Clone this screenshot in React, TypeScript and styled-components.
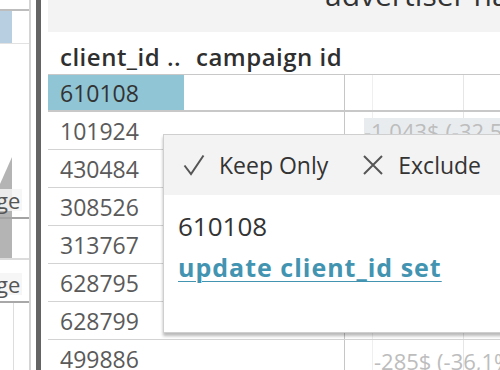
import styled, { createGlobalStyle } from "styled-components";

const GlobalStyle = createGlobalStyle`
  body {
    margin: 0;
    background: #ffffff;
  }
`;

const rows = [
  { id: "610108", value: "", selected: true },
  { id: "101924", value: "-1,043$ (-32,5%)", highlight: true },
  { id: "430484", value: "" },
  { id: "308526", value: "" },
  { id: "313767", value: "" },
  { id: "628795", value: "" },
  { id: "628799", value: "" },
  { id: "499886", value: "-285$ (-36,1%)" },
];

function App() {
  return (
    <>
      <GlobalStyle />
      <Frame>
        <SidePanel>
          <SideCut />
          <SideLine $color="#bdbdbd" $size={2} />
          <SideBlock $height={32}>
            <SideFill $color="#b8cfe2" />
          </SideBlock>
          <SideLine $color="#e2e2e2" $size={1} />
          <SideBlock $height={113} />
          <SideBlock $height={60}>
            <SideSlope />
            <SideLabel>ge</SideLabel>
          </SideBlock>
          <SideLine $color="#a3a3a3" $size={2} />
          <SideBlock $height={39}>
            <SideFill $color="#b4b4b4" />
          </SideBlock>
          <SideLine $color="#dcdcdc" $size={2} />
          <SideBlock $height={41}>
            <SideLabel>ge</SideLabel>
          </SideBlock>
          <SideLine $color="#a8a8a8" $size={2} />
          <SideRest />
        </SidePanel>
        <Gap $width={5} />
        <Divider />
        <Gap $width={7} />
        <Main>
          <TitleBar>
            <Title>advertiser name</Title>
          </TitleBar>
          <Gap $height={8} />
          <HeaderRow>
            <HeaderCell>client_id ..</HeaderCell>
            <HeaderCell>campaign id</HeaderCell>
          </HeaderRow>
          {rows.map((r, i) => (
            <Row key={r.id} $first={i === 0}>
              <IdCell $selected={r.selected}>{r.id}</IdCell>
              <Cell />
              <Cell $line="#c6c6c6">
                {r.highlight && <Value $highlight>{r.value}</Value>}
              </Cell>
              <Cell $line="#efefef">
                {!r.highlight && r.value && <Value>{r.value}</Value>}
              </Cell>
              <Cell $line="#e6e6e6" />
            </Row>
          ))}
        </Main>
        <Popup>
          <Toolbar>
            <Action>
              <svg width="22" height="22" viewBox="0 0 22 22">
                <path
                  d="M1.5 11.5 L8 20 L20.5 1.5"
                  fill="none"
                  stroke="#555"
                  strokeWidth="2"
                />
              </svg>
              Keep Only
            </Action>
            <Action>
              <svg width="22" height="22" viewBox="0 0 22 22">
                <path
                  d="M2 2 L20 20 M20 2 L2 20"
                  fill="none"
                  stroke="#555"
                  strokeWidth="2"
                />
              </svg>
              Exclude
            </Action>
          </Toolbar>
          <PopupBody>
            <PopupValue>610108</PopupValue>
            <SetLink href="#">update client_id set</SetLink>
          </PopupBody>
        </Popup>
      </Frame>
    </>
  );
}

export default App;

const Frame = styled.div`
  width: 500px;
  height: 370px;
  display: flex;
  overflow: hidden;
  position: relative;
  background: #ffffff;
  font-family: "Open Sans", "Noto Sans", sans-serif;
  color: #333;
`;

const SidePanel = styled.div`
  width: 29px;
  flex-shrink: 0;
  border-right: 2px solid #d4d4d4;
  display: flex;
  flex-direction: column;
`;

const SideCut = styled.div`
  height: 9px;
`;

const SideLine = styled.div<{ $color: string; $size: number }>`
  height: ${(p) => p.$size}px;
  background: ${(p) => p.$color};
  flex-shrink: 0;
`;

const SideBlock = styled.div<{ $height?: number }>`
  height: ${(p) => p.$height}px;
  flex-shrink: 0;
  position: relative;
  display: flex;
  align-items: flex-end;
  overflow: hidden;
`;

const SideFill = styled.div<{ $color: string }>`
  width: 12px;
  height: 100%;
  background: ${(p) => p.$color};
`;

const SideSlope = styled.div`
  width: 12px;
  height: 100%;
  background: #b4b4b4;
  clip-path: polygon(100% 0, 100% 100%, 0 100%, 0 45%);
`;

const SideLabel = styled.span`
  position: absolute;
  left: -4px;
  bottom: 6px;
  font-size: 22px;
  line-height: 22px;
  color: #555;
  background: rgba(245, 245, 245, 0.85);
  padding-right: 2px;
`;

const SideRest = styled.div`
  flex: 1;
  width: 13px;
  border-right: 1px solid #dddddd;
`;

const Gap = styled.div<{ $width?: number; $height?: number }>`
  flex-shrink: 0;
  width: ${(p) => (p.$width ? `${p.$width}px` : "auto")};
  height: ${(p) => (p.$height ? `${p.$height}px` : "auto")};
`;

const Divider = styled.div`
  width: 5px;
  flex-shrink: 0;
  background: #646464;
`;

const Main = styled.div`
  flex: 1;
  display: flex;
  flex-direction: column;
  min-width: 0;
`;

const TitleBar = styled.div`
  height: 32px;
  background: #f3f3f3;
  padding-left: 277px;
  overflow: hidden;
  flex-shrink: 0;
`;

const Title = styled.div`
  margin-top: -20px;
  font-size: 30px;
  line-height: 30px;
  white-space: nowrap;
  color: #333;
`;

const HeaderRow = styled.div`
  height: 34px;
  display: grid;
  grid-template-columns: 136px 160px 1fr;
  align-items: center;
  border-bottom: 1px solid #c8c8c8;
  flex-shrink: 0;
`;

const HeaderCell = styled.div`
  padding-left: 12px;
  font-size: 24px;
  line-height: 30px;
  font-weight: 600;
  letter-spacing: 0.5px;
  color: #2f2f2f;
  white-space: nowrap;
`;

const Row = styled.div<{ $first?: boolean }>`
  height: ${(p) => (p.$first ? 35 : 37)}px;
  display: grid;
  grid-template-columns: 136px 160px 28px 91px 1fr;
  border-bottom: ${(p) => (p.$first ? "2px solid #c8c8c8" : "1px solid #d3d3d3")};
  flex-shrink: 0;
`;

const Cell = styled.div<{ $line?: string }>`
  border-left: ${(p) => (p.$line ? `1px solid ${p.$line}` : "none")};
  position: relative;
  display: flex;
  align-items: center;
  white-space: nowrap;
`;

const IdCell = styled.div<{ $selected?: boolean }>`
  display: flex;
  align-items: center;
  padding-left: 12px;
  font-size: 23px;
  color: ${(p) => (p.$selected ? "#333" : "#5a5a5a")};
  background: ${(p) => (p.$selected ? "#8fc5d4" : "transparent")};
`;

const Value = styled.span<{ $highlight?: boolean }>`
  position: absolute;
  z-index: 1;
  left: ${(p) => (p.$highlight ? 19 : 1)}px;
  top: ${(p) => (p.$highlight ? 6 : 8)}px;
  font-size: 22px;
  line-height: 26px;
  color: #bdbdbd;
  background: ${(p) => (p.$highlight ? "#e9ecef" : "transparent")};
  padding-right: 40px;
`;

const Popup = styled.div`
  position: absolute;
  left: 163px;
  top: 134px;
  width: 360px;
  height: 197px;
  background: #ffffff;
  border: 1px solid #cfcfcf;
  box-shadow: 0 3px 3px rgba(0, 0, 0, 0.28);
  z-index: 5;
`;

const Toolbar = styled.div`
  height: 60px;
  background: #f3f3f3;
  display: flex;
  align-items: center;
  gap: 34px;
  padding-left: 19px;
`;

const Action = styled.div`
  display: flex;
  align-items: center;
  gap: 14px;
  font-size: 23px;
  color: #333;
  white-space: nowrap;
`;

const PopupBody = styled.div`
  padding: 16px 0 0 14px;
  display: flex;
  flex-direction: column;
  align-items: flex-start;
`;

const PopupValue = styled.div`
  font-size: 26px;
  line-height: 31px;
  color: #333;
`;

const SetLink = styled.a`
  margin-top: 10px;
  font-size: 25px;
  line-height: 30px;
  font-weight: 700;
  letter-spacing: 1px;
  color: #4394b1;
  text-decoration: underline;
  text-decoration-thickness: 1px;
  text-underline-offset: 4px;
`;
